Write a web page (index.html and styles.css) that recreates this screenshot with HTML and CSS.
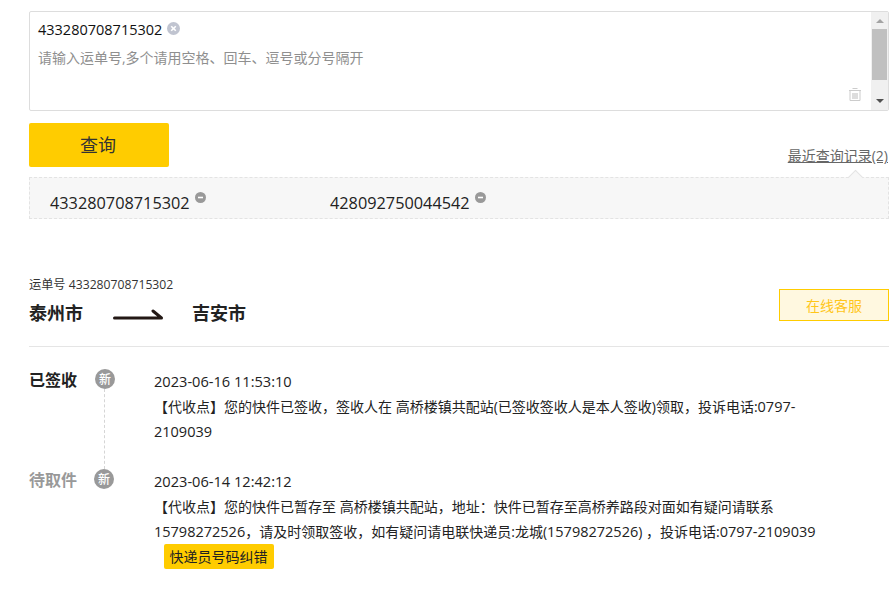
FILE: index.html
```html
<!DOCTYPE html>
<html lang="zh-CN">
<head>
<meta charset="utf-8">
<title>运单查询</title>
<link rel="stylesheet" href="styles.css">
</head>
<body>
<main class="page">
  <section class="input-box">
    <div class="input-main">
      <div class="tag"><span>433280708715302</span>
        <svg class="tag-x" width="13" height="13" viewBox="0 0 13 13"><circle cx="6.5" cy="6.5" r="6.5" fill="#c0c4d0"/><path d="M4.2 4.2l4.6 4.6M8.8 4.2l-4.6 4.6" stroke="#fff" stroke-width="1.6"/></svg>
      </div>
      <p class="hint">请输入运单号,多个请用空格、回车、逗号或分号隔开</p>
      <svg class="trash" width="12" height="13" viewBox="0 0 12 13"><path d="M3.5.5h5M0 2.5h12" stroke="#ccc" fill="none"/><path d="M1 3v9.500h10V3" stroke="#ccc" fill="none"/><rect x="3" y="5" width="6" height="6" fill="#ddd"/></svg>
    </div>
    <div class="scrollbar">
      <span class="arrow-up"></span>
      <span class="thumb"></span>
      <span class="arrow-down"></span>
    </div>
  </section>

  <div class="action-row">
    <button class="query-btn">查询</button>
    <a class="recent-link">最近查询记录(2)</a>
  </div>

  <section class="history">
    <span class="caret"></span>
    <div class="history-item"><span>433280708715302</span><svg class="minus" width="11" height="11" viewBox="0 0 11 11"><circle cx="5.500" cy="5.500" r="5.500" fill="#999"/><path d="M3 5.500h5" stroke="#fff" stroke-width="1.600"/></svg></div>
    <div class="history-item"><span>428092750044542</span><svg class="minus" width="11" height="11" viewBox="0 0 11 11"><circle cx="5.500" cy="5.500" r="5.500" fill="#999"/><path d="M3 5.500h5" stroke="#fff" stroke-width="1.600"/></svg></div>
  </section>

  <header class="summary">
    <div>
      <p class="waybill">运单号 433280708715302</p>
      <div class="route">
        <strong>泰州市</strong>
        <svg class="route-arrow" width="50" height="12" viewBox="0 0 50 12"><path d="M1.500 9h47L40 2" fill="none" stroke="#231815" stroke-width="3" stroke-linecap="round" stroke-linejoin="round"/></svg>
        <strong>吉安市</strong>
      </div>
    </div>
    <a class="service-btn">在线客服</a>
  </header>

  <section class="timeline">
    <article class="event">
      <h3 class="status">已签收</h3>
      <div class="node"><span class="badge">新</span><span class="dash"></span></div>
      <div class="detail">
        <p class="time">2023-06-16 11:53:10</p>
        <p class="desc">【代收点】您的快件已签收，签收人在 高桥楼镇共配站(已签收签收人是本人签收)领取，投诉电话:<span class="num">0797-2109039</span></p>
      </div>
    </article>
    <article class="event pending">
      <h3 class="status">待取件</h3>
      <div class="node"><span class="badge">新</span></div>
      <div class="detail">
        <p class="time">2023-06-14 12:42:12</p>
        <p class="desc">【代收点】您的快件已暂存至 高桥楼镇共配站，地址：快件已暂存至高桥养路段对面如有疑问请联系<span class="num">15798272526</span>，请及时领取签收，如有疑问请电联快递员:龙城(<span class="num">15798272526</span>) ，投诉电话:<span class="num">0797-2109039</span></p>
        <a class="fix-btn">快递员号码纠错</a>
      </div>
    </article>
  </section>
</main>
</body>
</html>
```

FILE: styles.css
```css
* { box-sizing: border-box; }
html, body { margin: 0; padding: 0; background: #fff; overflow: hidden; }
body {
  font-family: "Open Sans", "Noto Sans CJK SC", sans-serif;
  color: #222;
}
p, h3 { margin: 0; }
.page { width: 860px; margin-left: 29px; padding-top: 11px; }

.input-box {
  position: relative;
  display: flex;
  height: 100px;
  border: 1px solid #ddd;
  border-radius: 2px;
}
.input-main { position: relative; flex: 1; padding: 8px 8px; }
.tag { display: flex; align-items: flex-start; gap: 5px; height: 21px; font-size: 14.5px; line-height: 20px; color: #111; }
.tag-x { margin-top: 2px; }
.hint { margin-top: 7px; font-size: 14px; line-height: 20px; color: #8f8f8f; }
.trash { position: absolute; right: 10px; bottom: 9px; }

.scrollbar {
  display: flex;
  flex-direction: column;
  align-items: center;
  width: 17px;
  background: #f0f0f0;
}
.arrow-up { margin-top: 7px; border: 4px solid transparent; border-top: 0; border-bottom: 4px solid #a3a3a3; }
.thumb { width: 15px; height: 51px; margin-top: 6px; background: #c0c0c0; }
.arrow-down { margin-top: auto; margin-bottom: 7px; border: 4px solid transparent; border-bottom: 0; border-top: 4px solid #505050; }

.action-row { display: flex; justify-content: space-between; align-items: flex-end; margin-top: 12px; }
.query-btn {
  width: 140px;
  height: 44px;
  padding: 0 2px 2px 0;
  border: 0;
  border-radius: 2px;
  background: #ffcc00;
  color: #333;
  font: 18px "Noto Sans CJK SC", sans-serif;
}
.recent-link { margin-right: 1px; margin-bottom: 1px; font-size: 14px; line-height: 20px; color: #666; text-decoration: underline; }

.history {
  position: relative;
  display: flex;
  height: 42px;
  margin-top: 10px;
  padding-left: 20px;
  background: #f7f7f7;
  border: 1px dashed #e3e3e3;
}
.caret {
  position: absolute;
  top: -6px;
  right: 27px;
  width: 11px;
  height: 11px;
  background: #f7f7f7;
  border-top: 1px solid #e3e3e3;
  border-left: 1px solid #e3e3e3;
  transform: rotate(45deg);
}
.history-item { display: flex; align-items: flex-start; gap: 5px; width: 280px; padding-top: 14px; font-size: 16.3px; line-height: 22px; color: #222; }
.minus { margin-top: 0; }

.summary {
  display: flex;
  justify-content: space-between;
  align-items: flex-start;
  height: 70px;
  margin-top: 58px;
  border-bottom: 1px solid #e5e5e5;
}
.waybill { font-size: 12.2px; line-height: 16px; color: #333; }
.route { display: flex; align-items: center; gap: 30px; margin-top: 7px; height: 24px; }
.route strong { font: 700 18px/24px "Noto Sans CJK SC", sans-serif; color: #222; }
.route-arrow { margin-top: 5px; margin-right: -1px; }
.service-btn {
  display: flex;
  justify-content: center;
  align-items: center;
  width: 110px;
  height: 32px;
  margin-top: 12px;
  border: 1px solid #ffcc00;
  background: #fff8e0;
  color: #ffc61a;
  font-size: 14px;
}

.timeline { padding-top: 22px; }
.event { display: flex; min-height: 100px; }
.status { width: 66px; margin-top: -1px; font: 700 16px/22px "Noto Sans CJK SC", sans-serif; color: #222; }
.pending .status { color: #999; }
.node { display: flex; flex-direction: column; align-items: center; width: 20px; margin-right: 39px; }
.pending .node { margin-left: -1px; margin-right: 40px; }
.badge {
  display: flex;
  justify-content: center;
  align-items: center;
  width: 20px;
  height: 20px;
  border-radius: 50%;
  background: #999;
  color: #fff;
  font: 500 12px/20px "Noto Sans CJK SC", sans-serif;
}
.dash { flex: 1; width: 0; margin-left: -1px; border-left: 1px dashed #d5d5d5; }
.detail { width: 670px; }
.time { font-size: 14.6px; line-height: 25px; color: #222; }
.desc { font-size: 14px; line-height: 25px; color: #222; }
.num { font-size: 14.5px; }
.fix-btn {
  display: block;
  width: 110px;
  height: 25px;
  margin-left: 10px;
  padding-right: 1px;
  border-radius: 2px;
  background: #ffcc00;
  color: #222;
  font-size: 14px;
  line-height: 25px;
  text-align: center;
}
```
